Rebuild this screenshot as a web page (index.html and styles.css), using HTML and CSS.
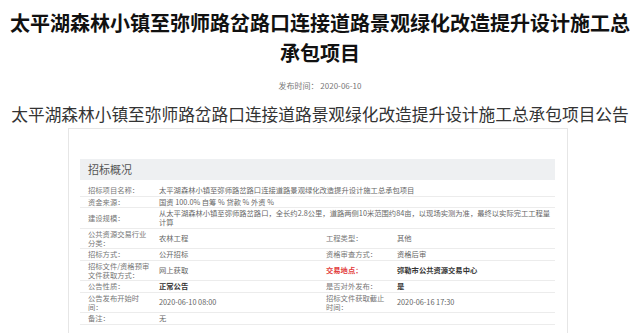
FILE: index.html
```html
<!DOCTYPE html>
<html lang="zh-CN">
<head>
    <meta charset="UTF-8">
    <title>招标公告</title>
    <link rel="stylesheet" href="styles.css">
</head>
<body>

    <h1 class="title">太平湖森林小镇至弥师路岔路口连接道路景观绿化改造提升设计施工总承包项目</h1>
    <div class="date">发布时间： 2020-06-10</div>
    <h2 class="subtitle">太平湖森林小镇至弥师路岔路口连接道路景观绿化改造提升设计施工总承包项目公告</h2>

    <!-- 招标概况 -->
    <div class="panel">
        <div class="panel-head">招标概况</div>
        <table class="info">
            <colgroup>
                <col class="c-label">
                <col class="c-value">
                <col class="c-label">
                <col class="c-value2">
            </colgroup>
            <tr>
                <td class="label">招标项目名称：</td>
                <td colspan="3">太平湖森林小镇至弥师路岔路口连接道路景观绿化改造提升设计施工总承包项目</td>
            </tr>
            <tr>
                <td class="label">资金来源：</td>
                <td colspan="3">国资 100.0% 自筹 % 贷款 % 外资 %</td>
            </tr>
            <tr>
                <td class="label">建设规模：</td>
                <td colspan="3">从太平湖森林小镇至弥师路岔路口，全长约2.8公里，道路两侧10米范围约84亩，以现场实测为准，最终以实际完工工程量计算</td>
            </tr>
            <tr>
                <td class="label">公共资源交易行业分类：</td>
                <td>农林工程</td>
                <td class="label">工程类型：</td>
                <td>其他</td>
            </tr>
            <tr>
                <td class="label">招标方式：</td>
                <td>公开招标</td>
                <td class="label">资格审查方式：</td>
                <td>资格后审</td>
            </tr>
            <tr>
                <td class="label">招标文件/资格预审文件获取方式：</td>
                <td>网上获取</td>
                <td class="label red">交易地点：</td>
                <td class="strong">弥勒市公共资源交易中心</td>
            </tr>
            <tr>
                <td class="label">公告性质：</td>
                <td class="strong">正常公告</td>
                <td class="label">是否对外发布：</td>
                <td class="strong">是</td>
            </tr>
            <tr>
                <td class="label">公告发布开始时间：</td>
                <td>2020-06-10 08:00</td>
                <td class="label">招标文件获取截止时间：</td>
                <td>2020-06-16 17:30</td>
            </tr>
            <tr>
                <td class="label">备注：</td>
                <td colspan="3">无</td>
            </tr>
        </table>
    </div>

</body>
</html>
```

FILE: styles.css
```css
body {
    margin: 8px;
    font-family: "Noto Sans CJK SC", "Noto Sans", sans-serif;
    background-color: #ffffff;
    color: #333;
    overflow: hidden;
}

.title {
    margin: 0;
    font-size: 20px;
    line-height: 30px;
    font-weight: bold;
    text-align: center;
    color: #111;
}

.date {
    margin-top: 12px;
    font-size: 8px;
    line-height: 12px;
    text-align: center;
    color: #777;
}

.subtitle {
    margin: 10px 0 0;
    font-size: 16.7px;
    line-height: 24px;
    font-weight: normal;
    text-align: center;
    color: #333;
    white-space: nowrap;
}

.panel {
    box-sizing: border-box;
    width: 500px;
    margin: 2px 0 0 60px;
    padding: 30px 12px 20px 11px;
    border: 1px solid #e6e6e6;
}

.panel-head {
    height: 21px;
    line-height: 21px;
    padding-left: 8px;
    font-size: 11px;
    color: #555;
    background-color: #eef0f2;
}

.info {
    width: 475px;
    margin-top: 5px;
    border-collapse: collapse;
    table-layout: fixed;
    font-size: 7.3px;
    line-height: 9px;
    color: #666;
}

.c-label {
    width: 72px;
}

.c-value {
    width: 166px;
}

.c-value2 {
    width: 165px;
}

.info td {
    padding: 1px 0 0.5px 7px;
    border-bottom: 1px solid #ececec;
    vertical-align: middle;
}

.info td.label {
    padding: 1px 0 0.5px 8px;
    color: #777;
}

.info td.red {
    color: #e23a3a;
    font-weight: bold;
}

.info td.strong {
    color: #333;
    font-weight: bold;
}
```
